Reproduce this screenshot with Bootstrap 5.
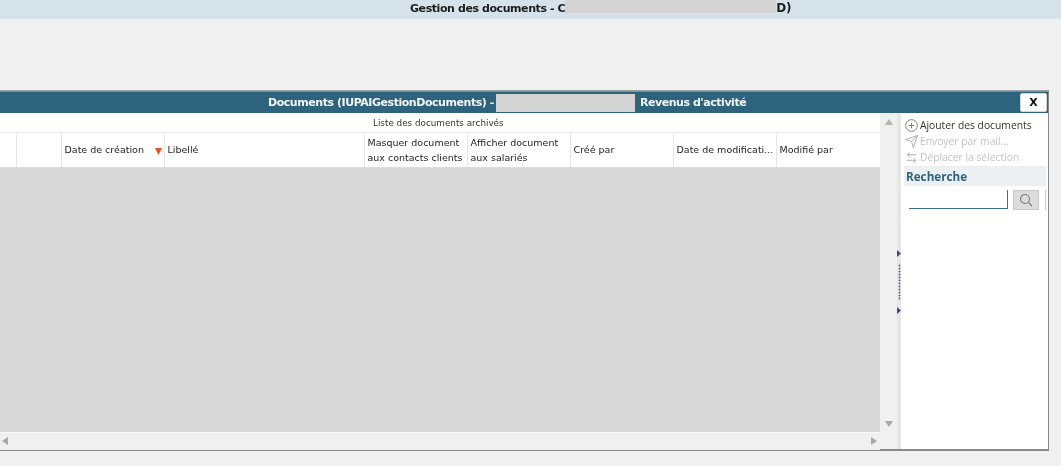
<!DOCTYPE html>
<html lang="fr">
<head>
<meta charset="utf-8">
<title>Gestion des documents</title>
<link href="https://cdn.jsdelivr.net/npm/bootstrap@5.3.0/dist/css/bootstrap.min.css" rel="stylesheet">
<style>
html,body{height:100%}
body{background:#f0f0f0;overflow:hidden;font-family:"DejaVu Sans","Liberation Sans",sans-serif;color:#222;filter:blur(.3px)}
.top-strip{height:19px;background:#d6e2e9;font-size:11px;font-weight:700;letter-spacing:-.42px;line-height:17px;color:#1c1c1c;padding-left:410px}
.mask-top{width:211px;height:13px;background:#d4d4d4;vertical-align:top}
.end-mark{font-size:12px;letter-spacing:0}
.doc-window{height:360px;margin:72px 12px 0 0;border:solid #85898b;border-width:1px 1px 2px 0;background:#fff;box-shadow:0 -1px 0 #9aa5aa}
.win-title{flex:none;height:21px;background:#2d637c;color:#f2f6f8;font-size:11px;font-weight:700;letter-spacing:-.45px}
.title-text{margin-left:268px;white-space:nowrap}
.title-label{padding-top:2px}
.mask-title{width:139px;height:18px;background:#d4d4d4;margin:0 5px 0 2px}
.close-btn{width:27px;height:19px;margin:0 1px 0 auto;padding:1px 0 0;background:#fff;border:1px solid #cfd8dc;border-radius:2px;font-size:11px;font-weight:700;line-height:16px;color:#111;font-family:"DejaVu Sans",sans-serif}
.win-body{flex:none;height:336px}
.grid-pane{flex:none;width:880px;height:100%}
.caption-row{flex:none;height:20px;line-height:20px;font-size:8.8px;padding-left:373px;color:#333;border-bottom:1px solid #e8e8e8}
.head-table{table-layout:fixed;width:880px;margin:0;font-size:9.5px;color:#1e1e1e}
.head-table th{height:34px;padding:0 3px;font-weight:400;line-height:15px;background:#fff;border:0;border-right:1px solid #e6e6e6;border-bottom:1px solid #dcdcdc;box-shadow:none;vertical-align:middle;white-space:nowrap;overflow:hidden}
.sort-mark{float:right;margin-top:5px;margin-right:-1px}
.grey-area{flex:none;height:264px;background:#d9d9d9}
.hscroll{flex:none;height:18px;background:#f0f0f0;border-top:1px solid #f8f8f8;padding:0 3px 0 2px}
.vscroll{flex:none;width:17px;height:100%;background:#f0f0f0;padding:6px 0 22px}
.split-col{flex:none;width:4px;height:100%;background:#e6e6e6;padding-top:137px}
.dots{width:3px;height:36px;margin:7px 0 7px 1px;background-image:radial-gradient(#7a72a8 45%,transparent 50%);background-size:3px 3px}
.side-pane{flex:1 1 0;min-width:0;padding:4px 2px 0 3px;font-family:"Open Sans","Noto Sans",sans-serif;font-size:10.3px;color:#333}
.side-act{height:16px;line-height:16px;white-space:nowrap}
.side-off{color:#c2c2c2}
.side-act svg{width:13px;height:13px;margin:0 2px 0 1px;flex:none}
.search-head{height:20px;line-height:20px;margin-top:1px;background:#ecf0f3;color:#2d637c;font-weight:700;font-size:11.7px;padding-left:2px}
.search-input{width:99px;height:19px;margin:4px 0 0 5px;border:solid #3c6f88;border-width:0 1px 1px 0;background:#fff}
.search-btn{width:26px;height:20px;margin:4px 0 0 5px;padding:0;background:#dcdcdc;border:1px solid #c8c8c8;border-radius:0}
.search-edge{width:1px;height:20px;margin:4px 0 0 6px;background:#c8c8c8}
</style>
</head>
<body>
<div class="top-strip"><span>Gestion des documents - C</span><span class="mask-top d-inline-block"></span><span class="end-mark">D)</span></div>
<div class="doc-window d-flex flex-column">
  <div class="win-title d-flex align-items-center">
    <div class="title-text d-flex align-items-center"><span class="title-label">Documents (IUPAIGestionDocuments) -</span><span class="mask-title d-inline-block"></span><span class="title-label">Revenus d'activité</span></div>
    <button class="close-btn" type="button">X</button>
  </div>
  <div class="win-body d-flex">
    <div class="grid-pane d-flex flex-column">
      <div class="caption-row">Liste des documents archivés</div>
      <table class="table head-table">
        <colgroup><col style="width:16px"><col style="width:45px"><col style="width:103px"><col style="width:200px"><col style="width:103px"><col style="width:103px"><col style="width:103px"><col style="width:103px"><col style="width:104px"></colgroup>
        <thead><tr>
          <th></th><th></th>
          <th>Date de création<svg class="sort-mark" width="7" height="8" viewBox="0 0 7 8"><path d="M0 1h7L3.5 8z" fill="#e8551a"/></svg></th>
          <th>Libellé</th>
          <th>Masquer document<br>aux contacts clients</th>
          <th>Afficher document<br>aux salariés</th>
          <th>Créé par</th>
          <th>Date de modificati...</th>
          <th>Modifié par</th>
        </tr></thead>
      </table>
      <div class="grey-area"></div>
      <div class="hscroll d-flex align-items-center justify-content-between">
        <svg width="6" height="8" viewBox="0 0 6 8"><path d="M6 0v8L0 4z" fill="#a8a8a8"/></svg>
        <svg width="6" height="8" viewBox="0 0 6 8"><path d="M0 0v8l6-4z" fill="#a8a8a8"/></svg>
      </div>
    </div>
    <div class="vscroll d-flex flex-column align-items-center justify-content-between">
      <svg width="8" height="6" viewBox="0 0 8 6"><path d="M4 0l4 6H0z" fill="#b4b4b4"/></svg>
      <svg width="8" height="6" viewBox="0 0 8 6"><path d="M0 0h8L4 6z" fill="#a8a8a8"/></svg>
    </div>
    <div class="split-col d-flex flex-column align-items-start">
      <svg width="4" height="7" viewBox="0 0 4 7"><path d="M0 0v7l4-3.500z" fill="#4a4088"/></svg>
      <div class="dots"></div>
      <svg width="4" height="7" viewBox="0 0 4 7"><path d="M0 0v7l4-3.500z" fill="#4a4088"/></svg>
    </div>
    <div class="side-pane">
      <div class="side-act d-flex align-items-center"><svg viewBox="0 0 14 14" fill="none" stroke="#777"><circle cx="7" cy="7" r="6.300"/><path d="M7 4v6M4 7h6"/></svg>Ajouter des documents</div>
      <div class="side-act side-off d-flex align-items-center"><svg viewBox="0 0 14 14" fill="none" stroke="#aaa"><path d="M.5 5L13.500 .5 9 13.500 7 7zM7 7l6.500-6.500"/></svg>Envoyer par mail...</div>
      <div class="side-act side-off d-flex align-items-center"><svg viewBox="0 0 14 14" fill="none" stroke="#aaa"><path d="M3 4h9M5 1.500L2.500 4 5 6.500M2 10h9M9 7.500l2.500 2.500L9 12.500"/></svg>Déplacer la sélection</div>
      <div class="search-head">Recherche</div>
      <div class="d-flex">
        <div class="search-input"></div>
        <button class="search-btn d-flex align-items-center justify-content-center" type="button" aria-label="Rechercher"><svg width="14" height="14" viewBox="0 0 14 14" fill="none" stroke="#777" stroke-width="1.100"><circle cx="6" cy="6" r="4.500"/><path d="M9.500 9.500L13 13"/></svg></button>
        <div class="search-edge"></div>
      </div>
    </div>
  </div>
</div>
</body>
</html>
